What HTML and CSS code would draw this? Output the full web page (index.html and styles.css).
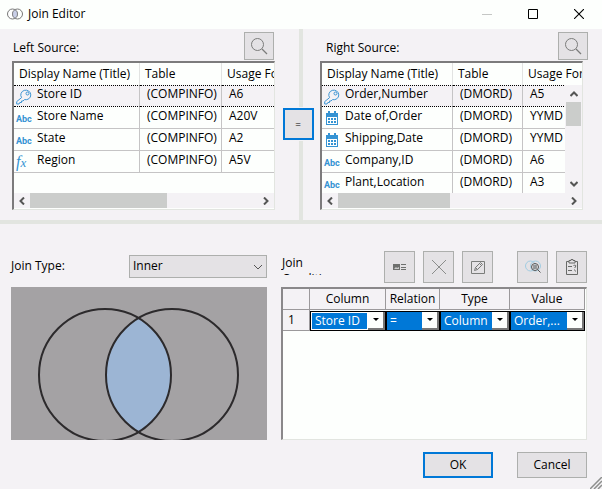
FILE: index.html
```html
<!DOCTYPE html>
<html lang="en">
<head>
<meta charset="utf-8">
<title>Join Editor</title>
<link rel="stylesheet" href="styles.css">
</head>
<body>
<svg class="defs" aria-hidden="true">
  <symbol id="search" viewBox="0 0 18 18"><circle cx="7.5" cy="7.5" r="6" fill="none" stroke="#7b7c7b"/><path d="M12 12l5 5" stroke="#7b7c7b" fill="none" stroke-width="1.2"/></symbol>
  <symbol id="key" viewBox="0 0 16 16"><path d="M5.600 8.600A5 4.800 0 1 1 8.500 10.600L7 12H5.500V13.500H3.800L3 15H.7V12.600Z" fill="none" stroke="#3d95d3"/><circle cx="11.500" cy="4.500" r="1.500" fill="none" stroke="#3d95d3"/></symbol>
  <symbol id="calendar" viewBox="0 0 14 15"><path d="M1 2h2V0h2v2h4V0h2v2h2v12H1z" fill="#3493d3"/><path d="M2 6h10v7H2z" fill="#fdfffd"/><path d="M3 8h8M3 11h8" stroke="#3493d3" stroke-width="2" stroke-dasharray="2 1"/></symbol>
  <symbol id="left" viewBox="0 0 8 8"><path d="M6 .5L2.500 4L6 7.500" fill="none" stroke="#555655" stroke-width="2"/></symbol>
</svg>
<header class="titlebar">
  <svg class="app-icon" viewBox="0 0 16 12"><circle cx="5.500" cy="6" r="5" fill="#fff" stroke="#777"/><circle cx="10.500" cy="6" r="5" fill="none" stroke="#777"/><path d="M8 1.700a5 5 0 0 1 0 8.600a5 5 0 0 1 0-8.600" fill="#c9cfe8" stroke="#777" stroke-width=".7"/></svg>
  <h1>Join Editor</h1>
  <button class="window-button" aria-label="Minimize" disabled><svg viewBox="0 0 10 10"><path d="M0 5.500h10" stroke="#c5c7c5"/></svg></button>
  <button class="window-button" aria-label="Maximize"><svg viewBox="0 0 10 10"><path d="M.5.500h9v9h-9z" fill="none" stroke="#000"/></svg></button>
  <button class="window-button" aria-label="Close"><svg viewBox="0 0 10 10"><path d="M0 0l10 10M10 0L0 10" stroke="#000" stroke-width="1.100"/></svg></button>
</header>
<main>
  <section class="sources">
    <div class="source source-left">
      <div class="source-head"><h2>Left Source:</h2><button class="search" aria-label="Search left source"><svg><use href="#search"/></svg></button></div>
      <div class="list">
        <div class="rows">
          <table>
            <colgroup><col class="name"><col class="file"><col class="usage"></colgroup>
            <thead><tr><th>Display Name (Title)</th><th>Table</th><th>Usage Format</th></tr></thead>
            <tbody>
              <tr class="current"><td><span class="field"><svg class="type key"><use href="#key"/></svg>Store ID</span></td><td>(COMPINFO)</td><td>A6</td></tr>
              <tr><td><span class="field"><span class="type abc">Abc</span>Store Name</span></td><td>(COMPINFO)</td><td>A20V</td></tr>
              <tr><td><span class="field"><span class="type abc">Abc</span>State</span></td><td>(COMPINFO)</td><td>A2</td></tr>
              <tr><td><span class="field"><span class="type fx">f<i>x</i></span>Region</span></td><td>(COMPINFO)</td><td>A5V</td></tr>
            </tbody>
          </table>
        </div>
        <div class="hscroll"><svg class="arrow"><use href="#left"/></svg><div class="track"><div class="thumb thumb-left"></div></div><svg class="arrow flip"><use href="#left"/></svg></div>
      </div>
    </div>
    <div class="splitter"><button class="equals">=</button></div>
    <div class="source source-right">
      <div class="source-head"><h2>Right Source:</h2><button class="search" aria-label="Search right source"><svg><use href="#search"/></svg></button></div>
      <div class="list">
        <div class="rows">
          <table>
            <colgroup><col class="name"><col class="file"><col class="usage"></colgroup>
            <thead><tr><th>Display Name (Title)</th><th>Table</th><th>Usage Format</th></tr></thead>
            <tbody>
              <tr class="current"><td><span class="field"><svg class="type key"><use href="#key"/></svg>Order,Number</span></td><td>(DMORD)</td><td>A5</td></tr>
              <tr><td><span class="field"><svg class="type cal"><use href="#calendar"/></svg>Date of,Order</span></td><td>(DMORD)</td><td>YYMD</td></tr>
              <tr><td><span class="field"><svg class="type cal"><use href="#calendar"/></svg>Shipping,Date</span></td><td>(DMORD)</td><td>YYMD</td></tr>
              <tr><td><span class="field"><span class="type abc">Abc</span>Company,ID</span></td><td>(DMORD)</td><td>A6</td></tr>
              <tr><td><span class="field"><span class="type abc">Abc</span>Plant,Location</span></td><td>(DMORD)</td><td>A3</td></tr>
            </tbody>
          </table>
          <div class="vscroll"><svg class="arrow up"><use href="#left"/></svg><div class="vtrack"><div class="vthumb"></div></div><svg class="arrow down"><use href="#left"/></svg></div>
        </div>
        <div class="hscroll"><svg class="arrow"><use href="#left"/></svg><div class="track"><div class="thumb thumb-right"></div></div><svg class="arrow flip"><use href="#left"/></svg></div>
      </div>
    </div>
  </section>
  <section class="join">
    <div class="kind">
      <div class="kind-head">
        <label for="join-type">Join Type:</label>
        <span class="combo"><select id="join-type"><option>Inner</option></select><svg viewBox="0 0 10 6"><path d="M1 1l4 4l4-4" fill="none" stroke="#555"/></svg></span>
      </div>
      <svg class="venn" viewBox="0 0 256 153" role="img" aria-label="Inner join"><path d="M127.500 31a66.500 66.500 0 0 1 0 114a66.500 66.500 0 0 1 0-114" fill="#9cb5d4"/><g fill="none" stroke="#2c2a2c" stroke-width="2"><circle cx="94" cy="88" r="66"/><circle cx="161" cy="88" r="66"/></g></svg>
    </div>
    <div class="conditions">
      <div class="tools">
        <h2 class="clipped">Join Conditions:</h2>
        <button aria-label="Insert value"><svg viewBox="0 0 16 16"><path d="M1 5h7v6H1z" fill="#6e706e"/><path d="M2 10l2-2l1 1l2-1v2z" fill="#ccc"/><path d="M9 5.500h5M9 8.500h5M9 10.500h5" stroke="#6e706e"/></svg></button>
        <button aria-label="Delete"><svg viewBox="0 0 16 16"><path d="M1 1l14 14M15 1L1 15" stroke="#8b8d8b"/></svg></button>
        <button class="edit" aria-label="Edit"><svg viewBox="0 0 16 16"><path d="M1.500 2.500h13v12h-13z" fill="none" stroke="#7b7d7b"/><path d="M4.500 11.500l1-3l5-5l2 2l-5 5zM5.500 8.500l2 2M9.500 4.500l2 2" fill="none" stroke="#777977"/></svg></button>
        <button aria-label="Preview join"><svg viewBox="0 0 16 16"><circle cx="5.500" cy="7" r="5" fill="none" stroke="#a1cce2"/><circle cx="10.500" cy="7" r="5" fill="none" stroke="#a1cce2"/><circle cx="10" cy="8" r="3.500" fill="#ddd" fill-opacity=".5" stroke="#555"/><path d="M12.500 10.500l3 3M9 6v4M11 6v4" stroke="#555"/></svg></button>
        <button aria-label="Check conditions"><svg viewBox="0 0 16 16"><path d="M5 2.500H2.500v13h11v-13H11M5 1.500h2V.500h2v1h2v2.500H5zM4 7.500h4M4 11.500h4M9.500 7l1-1q2 0 1 2l-1 1M10.500 10.500l1 2" fill="none" stroke="#686a68"/></svg></button>
      </div>
      <div class="grid-box">
        <table class="grid">
          <colgroup><col class="number"><col class="column"><col class="relation"><col class="kind-col"><col class="value"></colgroup>
          <thead><tr><th></th><th>Column</th><th>Relation</th><th>Type</th><th>Value</th></tr></thead>
          <tbody><tr><th>1</th>
            <td><span class="cell"><select class="focused" aria-label="Column"><option>Store ID</option></select><span class="drop"></span></span></td>
            <td><span class="cell"><select aria-label="Relation"><option>=</option></select><span class="drop"></span></span></td>
            <td><span class="cell"><select aria-label="Type"><option>Column</option></select><span class="drop"></span></span></td>
            <td><span class="cell"><select aria-label="Value"><option>Order,...</option></select><span class="drop"></span></span></td>
          </tr></tbody>
        </table>
      </div>
    </div>
  </section>
</main>
<footer><button class="primary">OK</button><button>Cancel</button>
<svg class="grip" viewBox="0 0 12 12"><path d="M0 12L12 0M4 12L12 4M8 12L12 8" stroke="#8d8f8d" stroke-width="1.500"/></svg></footer>
</body>
</html>
```
FILE: styles.css
```css
* { box-sizing: border-box; }
body {
  margin: 0;
  min-height: 100vh;
  position: relative;
  background: #f4f2f5;
  color: #000;
  font: 12px/16px "Open Sans", "Noto Sans", sans-serif;
}
button, select { font: inherit; color: inherit; margin: 0; padding: 0; border-radius: 0; }
button { background: #e4e2e5; border: 1px solid #adafad; }
svg { display: block; flex: none; }
h1, h2 { margin: 0; font: inherit; }
.defs { position: absolute; width: 0; height: 0; }

.titlebar { display: flex; align-items: center; height: 29px; padding: 0 0 2px 7px; background: #fdfffd; }
.app-icon { width: 16px; height: 12px; margin-right: 5px; }
.titlebar h1 { flex: 1; }
.window-button { display: grid; place-items: center; width: 46px; height: 26px; border: 0; background: none; }
.window-button svg { width: 10px; height: 10px; }

.sources { display: grid; grid-template-columns: 1fr 4px 1fr; height: 195px; border-bottom: 4px solid #e2e5e0; }
.source { min-width: 0; padding-top: 3px; }
.source-left { padding-left: 12px; padding-right: 24px; }
.source-right { padding-left: 17px; padding-right: 19px; }
.source-head { display: flex; justify-content: space-between; align-items: flex-start; height: 29px; }
.source-head h2 { padding: 8px 0 0 1px; }
.source-left .source-head { margin-right: 1px; }
.source-right .source-head { margin-right: -5px; }
.source-right h2 { padding-left: 6px; }
.search { display: grid; place-items: center; width: 30px; height: 28px; }
.search svg { width: 18px; height: 18px; }
.splitter { display: flex; align-items: center; justify-content: center; background: #e2e5e0; }
.equals { flex: none; width: 31px; height: 32px; margin: 0 6px 2px 0; border: 2px solid #0078d7; outline: 1px solid #f4f2f5; position: relative; font-size: 10px; }

.list { height: 149px; border: 1px solid #e2e5e0; border-top: 2px solid #7c7b7c; border-left: 2px solid #7c7b7c; background: #fdfffd; }
.rows { position: relative; height: 130px; overflow: hidden; }
table { width: 100%; table-layout: fixed; border-collapse: separate; border-spacing: 0; }
th { font-weight: 400; }
.list th, .list td { padding: 0 0 0 7px; text-align: left; white-space: nowrap; overflow: hidden; border-right: 1px solid #c5c4c5; }
.list th { height: 22px; padding-left: 5px; border-right-color: #e2e3e2; }
.list th:last-child, .list td:last-child { border-right: 0; }
.list td { height: 22px; padding-bottom: 4px; border-bottom: 1px solid #c5c4c5; }
.current td { background: #f4f2f5; border-top: 1px dotted #000; border-bottom: 1px dotted #000; }
.list td:first-child { padding-left: 2px; }
.field { display: flex; height: 16px; }
.type { flex: none; width: 16px; height: 16px; margin: 3px 5px 0 0; }
.cal { height: 15px; }
.abc { color: #3493d3; font: bold 9px/16px Roboto, sans-serif; }
.fx { color: #3493d3; font: italic 16px/14px "Liberation Serif", serif; }
.fx i { font-size: 13px; }
.source-left .name { width: 126px; }
.source-left .file { width: 82px; }
.source-right .name { width: 131px; }
.source-right .file { width: 70px; }

.hscroll { display: flex; height: 15px; align-items: center; background: #f4f2f5; }
.arrow { width: 8px; height: 8px; margin: 0 4px; }
.flip { transform: rotate(180deg); }
.track { flex: 1; height: 15px; }
.thumb { height: 15px; background: #cbcdcb; }
.thumb-left { width: 60%; }
.thumb-right { width: 49%; }
.vscroll { position: absolute; top: 22px; bottom: 0; right: 0; width: 17px; display: flex; flex-direction: column; align-items: center; padding: 5px 0; background: #f4f2f5; }
.vtrack { flex: 1; width: 15px; padding-top: 4px; }
.vthumb { height: 24px; background: #cbcdcb; }
.up { transform: rotate(90deg); }
.down { transform: rotate(-90deg); }

.join { display: grid; grid-template-columns: 256fr 306fr; gap: 14px; padding: 27px 15px 0 11px; }
.kind, .conditions { min-width: 0; }
.kind-head { display: flex; justify-content: space-between; align-items: center; height: 36px; padding-bottom: 6px; }
.combo { position: relative; width: 138px; }
select { appearance: none; display: block; width: 100%; outline: 0; }
.combo select { height: 23px; padding: 0 3px; border: 1px solid #adafad; background: #e4e2e5; }
.combo svg { position: absolute; right: 4px; top: 9px; width: 10px; height: 6px; pointer-events: none; }
.venn { width: 100%; background: #a4a2a4; }

.tools { display: flex; gap: 8px; height: 36px; align-items: flex-start; }
.tools button { display: grid; place-items: center; width: 31px; height: 32px; }
.tools svg { width: 16px; height: 16px; }
.tools .edit { margin-right: 16px; }
.clipped { flex: 1; min-width: 0; height: 20px; padding: 0 40px 0 1px; margin-top: 4px; overflow: hidden; }
.grid-box { height: 153px; border: 1px solid #e2e5e0; border-top: 2px solid #8a888a; border-left: 2px solid #8a888a; background: #fdfffd; }
.grid { width: 302px; max-width: 100%; }
.grid th { height: 21px; padding: 0; background: #f4f2f5; border-right: 1px solid #9b999b; border-bottom: 1px solid #9b999b; }
.grid tbody th { text-align: left; padding-left: 5px; }
.grid td { padding: 0; }
.number { width: 27px; }
.column { width: 76px; }
.relation { width: 54px; }
.kind-col { width: 70px; }
.cell { display: flex; height: 20px; border: 1px solid #000; }
.cell select { flex: 1; min-width: 0; height: 18px; padding: 0 2px; border: 1px solid #0078d7; background: #0078d7; color: #fff; }
.cell .focused { padding: 0 3px; border-color: #fff; }
.drop { flex: none; width: 17px; display: grid; place-items: center; background: #fdfffd; border-right: 2px solid #777; border-bottom: 2px solid #777; }
.drop::after { content: ""; border: 3px solid transparent; border-top-color: #000; border-bottom: 0; }

footer { display: flex; justify-content: flex-end; gap: 24px; padding: 12px 15px 11px; }
footer button { width: 70px; height: 26px; }
.primary { border: 2px solid #0078d7; }
.grip { position: absolute; right: 0; bottom: 0; width: 12px; height: 12px; }
```
